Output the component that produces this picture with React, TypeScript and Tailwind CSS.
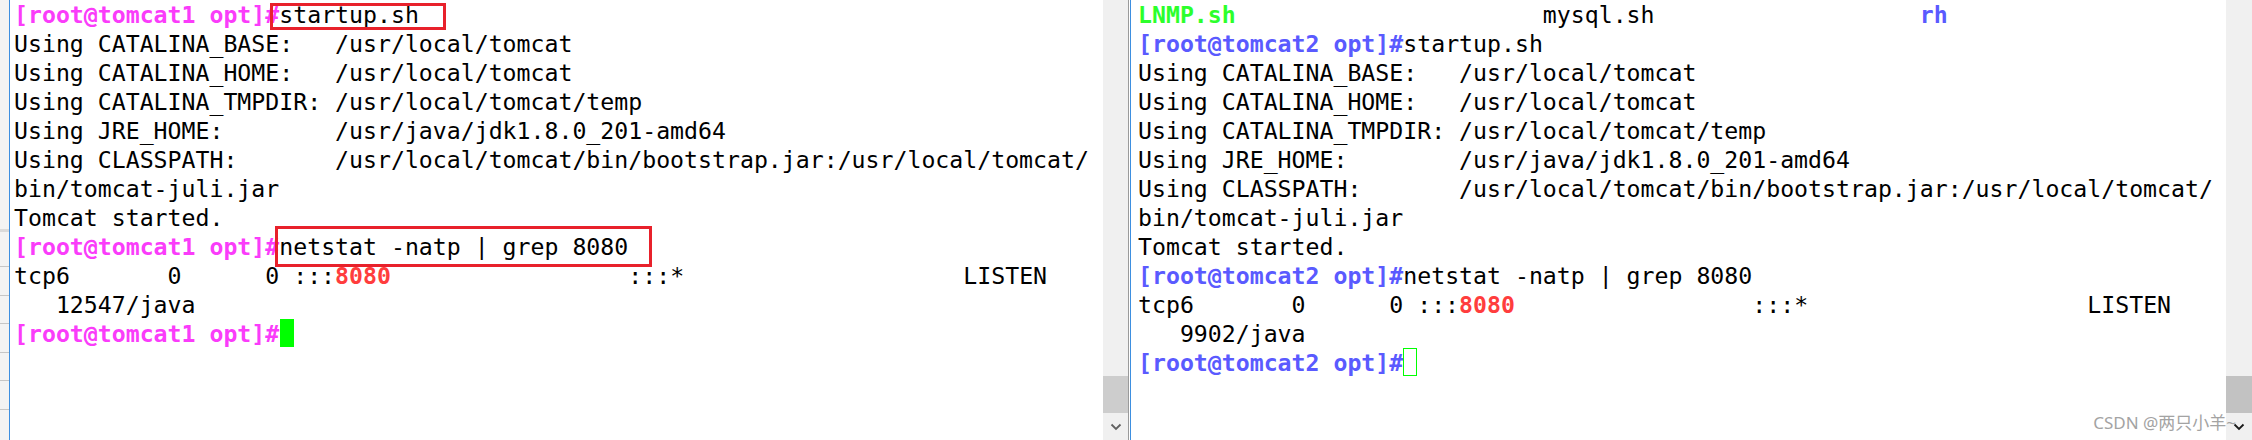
import React from "react";

const LeftPrompt = () => (
  <span className="font-bold text-[#fa3cfa]">[root@tomcat1 opt]#</span>
);
const RightPrompt = () => (
  <span className="font-bold text-[#5a5aff]">[root@tomcat2 opt]#</span>
);
const Port = () => <span className="font-bold text-[#ff3d3d]">8080</span>;

const Common = () => (
  <>
    <div>{"Using CATALINA_BASE:   /usr/local/tomcat"}</div>
    <div>{"Using CATALINA_HOME:   /usr/local/tomcat"}</div>
    <div>{"Using CATALINA_TMPDIR: /usr/local/tomcat/temp"}</div>
    <div>{"Using JRE_HOME:        /usr/java/jdk1.8.0_201-amd64"}</div>
    <div>{"Using CLASSPATH:       /usr/local/tomcat/bin/bootstrap.jar:/usr/local/tomcat/"}</div>
    <div>{"bin/tomcat-juli.jar"}</div>
    <div>{"Tomcat started."}</div>
  </>
);

const TcpLine = () => (
  <div>
    {"tcp6       0      0 :::"}
    <Port />
    {"                 :::*                    LISTEN"}
  </div>
);

const Chevron = ({ cls }: { cls: string }) => (
  <svg width="12" height="8" viewBox="0 0 12 8" className={cls}>
    <path d="M1.5 1.5 L6 6 L10.5 1.5" fill="none" stroke="currentColor" strokeWidth="1.8" />
  </svg>
);

const LeftStrip = () => (
  <div className="flex h-full w-[9px] flex-col bg-[#f3f3f3]">
    <div className="h-[229px]" />
    <div className="h-[3px] bg-[#dadada]" />
    <div className="h-[35px] border-b border-[#c6c6c6]" />
    <div className="h-[29px] border-b border-[#c6c6c6]" />
    <div className="h-[28px] border-b border-[#c6c6c6]" />
    <div className="h-[29px] border-b border-[#c6c6c6]" />
    <div className="h-[28px] border-b border-[#c6c6c6]" />
    <div className="h-[29px] border-b border-[#c6c6c6]" />
    <div className="flex-1" />
  </div>
);

export default function App() {
  return (
    <div className="relative flex h-[440px] w-[2252px] overflow-hidden bg-white font-['DejaVu_Sans_Mono',monospace] text-[23.2px] leading-[29px] text-black">
      <LeftStrip />
      <div className="w-px bg-[#3d8fe0]" />

      {/* left terminal */}
      <div className="w-[1093px] whitespace-pre pl-[4px]">
        <div>
          <LeftPrompt />
          {"startup.sh"}
        </div>
        <Common />
        <div>
          <LeftPrompt />
          {"netstat -natp | grep 8080"}
        </div>
        <TcpLine />
        <div>{"   12547/java"}</div>
        <div>
          <LeftPrompt />
          <span className="ml-[1px] inline-block h-[28px] w-[14px] bg-[#00ff00] align-top" />
        </div>
      </div>

      {/* left scrollbar */}
      <div className="flex w-[25px] flex-col bg-[#f0f0f0]">
        <div className="flex-1" />
        <div className="h-[37px] bg-[#cdcdcd]" />
        <div className="flex h-[27px] items-center justify-center">
          <Chevron cls="text-[#606060]" />
        </div>
      </div>
      <div className="w-px bg-[#9a9a9a]" />
      <div className="w-px bg-white" />
      <div className="w-px bg-[#3d8fe0]" />

      {/* right terminal */}
      <div className="w-[1095px] whitespace-pre pl-[7px]">
        <div>
          <span className="font-bold text-[#2cff2c]">LNMP.sh</span>
          {"                      mysql.sh                   "}
          <span className="font-bold text-[#5a5aff]">rh</span>
        </div>
        <div>
          <RightPrompt />
          {"startup.sh"}
        </div>
        <Common />
        <div>
          <RightPrompt />
          {"netstat -natp | grep 8080"}
        </div>
        <TcpLine />
        <div>{"   9902/java"}</div>
        <div>
          <RightPrompt />
          <span className="inline-block h-[28px] w-[14px] border-[1.5px] border-[#00ff00] align-top" />
        </div>
      </div>

      {/* right scrollbar */}
      <div className="flex w-[26px] flex-col bg-[#f0f0f0]">
        <div className="flex-1" />
        <div className="h-[37px] bg-[#c2c2c2]" />
        <div className="flex h-[27px] items-center justify-center">
          <Chevron cls="text-[#1a1a1a]" />
        </div>
      </div>

      {/* annotation boxes */}
      <div className="absolute left-[270px] top-[3px] h-[27px] w-[176px] border-[3px] border-[#e8212b]" />
      <div className="absolute left-[275px] top-[226px] h-[41px] w-[377px] border-[3px] border-[#e8212b]" />

      {/* watermark */}
      <div className="absolute bottom-[9px] right-[16px] font-['Noto_Sans','Noto_Sans_CJK_SC',sans-serif] text-[17px] leading-none text-[#a3a3a3]">
        CSDN @两只小羊~
      </div>
    </div>
  );
}
